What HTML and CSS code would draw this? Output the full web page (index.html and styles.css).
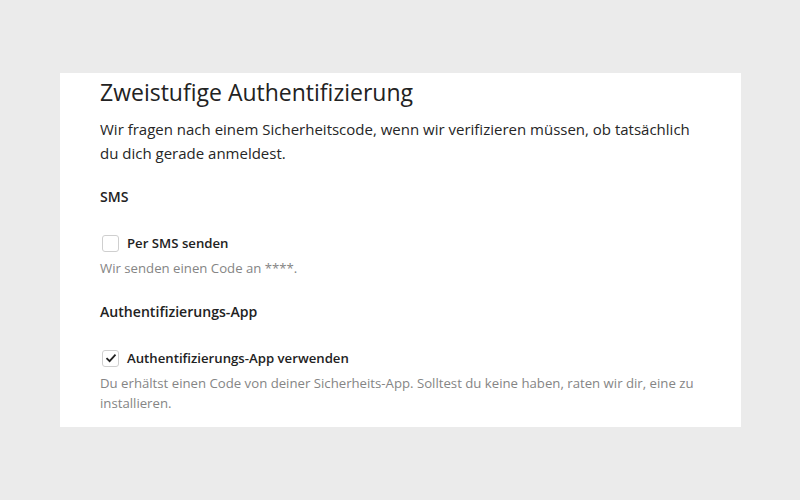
FILE: index.html
```html
<!DOCTYPE html>
<html lang="de">
<head>
<meta charset="utf-8">
<link rel="stylesheet" href="styles.css">
</head>
<body>
<main class="card">
  <h1 class="title">Zweistufige Authentifizierung</h1>
  <p class="intro">Wir fragen nach einem Sicherheitscode, wenn wir verifizieren müssen, ob tatsächlich du dich gerade anmeldest.</p>

  <section class="group">
    <h2 class="heading">SMS</h2>
    <label class="option">
      <span class="box"></span>
      <span class="label">Per SMS senden</span>
    </label>
    <p class="help">Wir senden einen Code an ****.</p>
  </section>

  <section class="group">
    <h2 class="heading">Authentifizierungs-App</h2>
    <label class="option">
      <span class="box checked">
        <svg width="12" height="10" viewBox="0 0 12 10"><path d="M1.5 5.2 L4.6 8.2 L10.5 1.6" fill="none" stroke="#222" stroke-width="1.8"/></svg>
      </span>
      <span class="label">Authentifizierungs-App verwenden</span>
    </label>
    <p class="help">Du erhältst einen Code von deiner Sicherheits-App. Solltest du keine haben, raten wir dir, eine zu installieren.</p>
  </section>
</main>
</body>
</html>
```

FILE: styles.css
```css
html, body {
  margin: 0;
  padding: 0;
  background: #ebebeb;
}
body {
  padding-top: 73px;
  font-family: "Open Sans", "Noto Sans", sans-serif;
  color: #262626;
}
.card {
  margin-left: 60px;
  width: 681px;
  height: 354px;
  box-sizing: border-box;
  background: #fff;
  padding: 2px 40px 0 40px;
}
.title {
  margin: 0;
  font-size: 23px;
  font-weight: 400;
  line-height: 34px;
  color: #222;
}
.intro {
  margin: 8px 0 0 0;
  font-size: 15px;
  line-height: 24px;
  color: #262626;
}
.group {
  margin-top: 20px;
}
.group + .group {
  margin-top: 22px;
}
.heading {
  margin: 0;
  font-size: 14.1px;
  font-weight: 600;
  line-height: 24px;
  color: #222;
}
.option {
  display: flex;
  align-items: center;
  gap: 8px;
  margin-top: 25px;
  margin-left: 2px;
  height: 18px;
}
.box {
  width: 15px;
  height: 15px;
  border: 1px solid #cfcfcf;
  border-radius: 3px;
  background: #fff;
  display: flex;
  align-items: center;
  justify-content: center;
}
.label {
  font-size: 13.2px;
  font-weight: 600;
  color: #222;
}
.help {
  margin: 6px 0 0 0;
  font-size: 13.2px;
  line-height: 20px;
  color: #858585;
}
```
